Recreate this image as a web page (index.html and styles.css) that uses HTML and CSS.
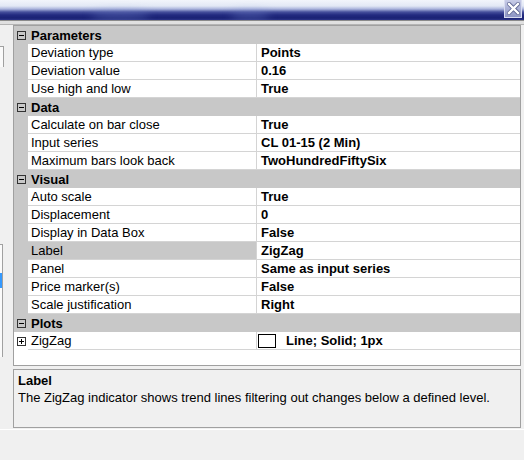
FILE: index.html
```html
<!DOCTYPE html>
<html lang="en">

<head>
    <meta charset="UTF-8">
    <meta name="viewport" content="width=device-width, initial-scale=1.0">
    <title>Indicator Properties</title>
    <link rel="stylesheet" href="styles.css">
</head>

<body>
    <div class="titlebar">
        <span class="glow glow-a"></span>
        <span class="glow glow-b"></span>
        <button class="close" type="button" aria-label="Close">
            <svg width="13" height="13" viewBox="0 0 13 13">
                <path d="M2 2 L11 11 M11 2 L2 11" stroke="#5a6290" stroke-width="4" stroke-linecap="square" />
                <path d="M2 2 L11 11 M11 2 L2 11" stroke="#ffffff" stroke-width="2.4" stroke-linecap="square" />
            </svg>
        </button>
    </div>
    <div class="rule"></div>

    <div class="content">
        <div class="side">
            <div class="side-box side-top"></div>
            <div class="side-box side-list">
                <span class="side-pick"></span>
            </div>
        </div>

        <div class="main">
            <div class="grid">
                <!-- Parameters -->
                <div class="cat">
                    <span class="toggle"><svg width="9" height="9" viewBox="0 0 9 9"><rect x="0.5" y="0.5" width="8" height="8" fill="none" stroke="#333" /><path d="M2 4.5 H7" stroke="#000" /></svg></span>
                    Parameters
                </div>
                <div class="row"><div class="gut"></div><div class="name">Deviation type</div><div class="val">Points</div></div>
                <div class="row"><div class="gut"></div><div class="name">Deviation value</div><div class="val">0.16</div></div>
                <div class="row"><div class="gut"></div><div class="name">Use high and low</div><div class="val">True</div></div>

                <!-- Data -->
                <div class="cat">
                    <span class="toggle"><svg width="9" height="9" viewBox="0 0 9 9"><rect x="0.5" y="0.5" width="8" height="8" fill="none" stroke="#333" /><path d="M2 4.5 H7" stroke="#000" /></svg></span>
                    Data
                </div>
                <div class="row"><div class="gut"></div><div class="name">Calculate on bar close</div><div class="val">True</div></div>
                <div class="row"><div class="gut"></div><div class="name">Input series</div><div class="val">CL 01-15 (2 Min)</div></div>
                <div class="row"><div class="gut"></div><div class="name">Maximum bars look back</div><div class="val">TwoHundredFiftySix</div></div>

                <!-- Visual -->
                <div class="cat">
                    <span class="toggle"><svg width="9" height="9" viewBox="0 0 9 9"><rect x="0.5" y="0.5" width="8" height="8" fill="none" stroke="#333" /><path d="M2 4.5 H7" stroke="#000" /></svg></span>
                    Visual
                </div>
                <div class="row"><div class="gut"></div><div class="name">Auto scale</div><div class="val">True</div></div>
                <div class="row"><div class="gut"></div><div class="name">Displacement</div><div class="val">0</div></div>
                <div class="row"><div class="gut"></div><div class="name">Display in Data Box</div><div class="val">False</div></div>
                <div class="row selected"><div class="gut"></div><div class="name">Label</div><div class="val">ZigZag</div></div>
                <div class="row"><div class="gut"></div><div class="name">Panel</div><div class="val">Same as input series</div></div>
                <div class="row"><div class="gut"></div><div class="name">Price marker(s)</div><div class="val">False</div></div>
                <div class="row"><div class="gut"></div><div class="name">Scale justification</div><div class="val">Right</div></div>

                <!-- Plots -->
                <div class="cat">
                    <span class="toggle"><svg width="9" height="9" viewBox="0 0 9 9"><rect x="0.5" y="0.5" width="8" height="8" fill="none" stroke="#333" /><path d="M2 4.5 H7" stroke="#000" /></svg></span>
                    Plots
                </div>
                <div class="row">
                    <div class="gut gut-open">
                        <span class="toggle"><svg width="9" height="9" viewBox="0 0 9 9"><rect x="0.5" y="0.5" width="8" height="8" fill="#fff" stroke="#333" /><path d="M2 4.5 H7 M4.5 2 V7" stroke="#000" /></svg></span>
                    </div>
                    <div class="name name-plot">ZigZag</div>
                    <div class="val val-plot"><span class="swatch"></span>Line; Solid; 1px</div>
                </div>
            </div>

            <div class="desc">
                <div class="desc-title">Label</div>
                <div class="desc-text">The ZigZag indicator shows trend lines filtering out changes below a defined level.</div>
            </div>
        </div>
    </div>
    <div class="footer"></div>
</body>

</html>
```

FILE: styles.css
```css
body {
    font-family: 'Liberation Sans', Arial, sans-serif;
    font-size: 13px;
    color: #000;
    background-color: #f0f0f0;
    margin: 0;
    width: 524px;
    height: 460px;
    overflow: hidden;
}

/* window caption */
.titlebar {
    position: relative;
    height: 20px;
    background: linear-gradient(to bottom, #f2f5fb 0, #e2e8f5 6px, #aab4dc 9px, #46509c 12px, #222a80 15px, #1a2274 18px, #2c3488 20px);
    overflow: hidden;
}

.glow {
    position: absolute;
    top: 11px;
    height: 9px;
    border-radius: 50%;
    background: rgba(120, 140, 210, 0.35);
    filter: blur(4px);
}

.glow-a {
    left: 90px;
    width: 60px;
}

.glow-b {
    left: 230px;
    width: 40px;
}

.close {
    position: absolute;
    right: 2px;
    top: 0;
    width: 18px;
    height: 18px;
    padding: 0;
    border: 1px solid #d8dcf0;
    border-top: none;
    background: linear-gradient(to bottom, #c8cde8, #8d95c4);
    display: flex;
    align-items: center;
    justify-content: center;
}

.rule {
    height: 5px;
    border-top: 1px solid #8a8a8a;
    border-bottom: 1px solid #b4b4b4;
    background-color: #e0e0e0;
    box-sizing: border-box;
}

.content {
    display: flex;
}

/* strip of the neighbouring panel on the left */
.side {
    width: 13px;
    display: flex;
    flex-direction: column;
}

.side-box {
    width: 3px;
    border-right: 1px solid #a0a0a0;
    background-color: #fafafa;
}

.side-top {
    margin-top: 21px;
    height: 20px;
    border-top: 1px solid #a0a0a0;
}

.side-list {
    margin-top: 177px;
    height: 113px;
    border-top: 1px solid #a0a0a0;
    display: flex;
    flex-direction: column;
    padding-top: 28px;
    box-sizing: border-box;
}

.side-pick {
    height: 15px;
    background-color: #3399ff;
}

.main {
    width: 508px;
}

/* property grid */
.grid {
    height: 339px;
    border: 1px solid #a0a0a0;
    background-color: #fff;
}

.cat {
    height: 18px;
    line-height: 18px;
    padding-top: 1px;
    box-sizing: border-box;
    background-color: #c8c8c8;
    font-weight: bold;
    display: flex;
    align-items: center;
}

.toggle {
    width: 9px;
    height: 9px;
    margin: 0 3px 0 3px;
    display: flex;
}

.cat .toggle {
    margin-right: 5px;
    margin-top: -1px;
}

.row {
    display: grid;
    grid-template-columns: 14px 229px 1fr;
    height: 18px;
}

.gut {
    background-color: #c8c8c8;
}

.gut-open {
    background-color: #fff;
    display: flex;
    align-items: center;
}

.name,
.val {
    line-height: 16px;
    padding-top: 1px;
    border-bottom: 1px solid #d4d4d4;
    padding-left: 3px;
    white-space: nowrap;
    overflow: hidden;
}

.name {
    border-right: 1px solid #d4d4d4;
}

.val {
    font-weight: bold;
    padding-left: 4px;
}

.selected .name {
    background-color: #c8c8c8;
}

.val-plot {
    display: flex;
    align-items: center;
    padding-left: 1px;
    padding-top: 0;
}

.swatch {
    width: 16px;
    height: 12px;
    border: 1px solid #000;
    background-color: #fff;
    margin-right: 10px;
}

/* help text under the grid */
.desc {
    margin-top: 3px;
    border: 1px solid #a0a0a0;
    background-color: #f0f0f0;
    padding: 3px 0 0 4px;
    height: 54px;
}

.desc-title {
    font-weight: bold;
    line-height: 16px;
}

.desc-text {
    line-height: 17px;
}

.footer {
    height: 30px;
    border-top: 1px solid #fff;
    margin-top: 1px;
}
```
